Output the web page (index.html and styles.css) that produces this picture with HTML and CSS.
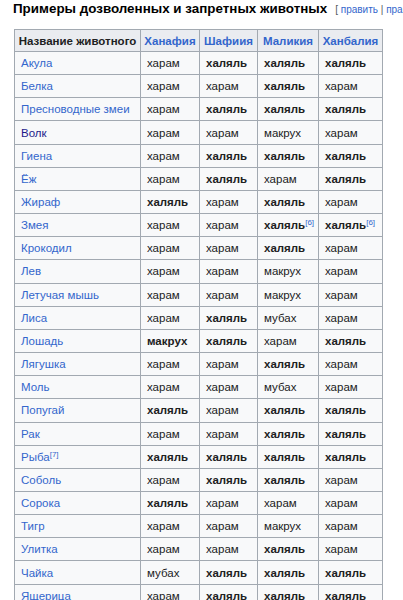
FILE: index.html
```html
<!DOCTYPE html>
<html lang="ru">
<head>
<meta charset="utf-8">
<title>Примеры дозволенных и запретных животных</title>
<link rel="stylesheet" href="styles.css">
</head>
<body>
<h2 class="heading"><span class="headline">Примеры дозволенных и запретных животных</span><span class="edit">[ <a href="#">править</a> | <a href="#">править код</a> ]</span></h2>
<table class="wikitable">
<colgroup><col class="c1"><col class="c2"><col class="c3"><col class="c4"><col class="c5"></colgroup>
<thead>
<tr><th class="plain">Название животного</th><th><a href="#">Ханафия</a></th><th><a href="#">Шафиия</a></th><th><a href="#">Маликия</a></th><th><a href="#">Ханбалия</a></th></tr>
</thead>
<tbody>
<tr><td><a href="#">Акула</a></td><td>харам</td><td><b>халяль</b></td><td><b>халяль</b></td><td><b>халяль</b></td></tr>
<tr><td><a href="#">Белка</a></td><td>харам</td><td>харам</td><td><b>халяль</b></td><td>харам</td></tr>
<tr><td><a href="#">Пресноводные змеи</a></td><td>харам</td><td><b>халяль</b></td><td><b>халяль</b></td><td><b>халяль</b></td></tr>
<tr><td><a href="#" class="visited">Волк</a></td><td>харам</td><td>харам</td><td>макрух</td><td>харам</td></tr>
<tr><td><a href="#">Гиена</a></td><td>харам</td><td><b>халяль</b></td><td><b>халяль</b></td><td><b>халяль</b></td></tr>
<tr><td><a href="#">Ёж</a></td><td>харам</td><td><b>халяль</b></td><td>харам</td><td><b>халяль</b></td></tr>
<tr><td><a href="#">Жираф</a></td><td><b>халяль</b></td><td>харам</td><td><b>халяль</b></td><td>харам</td></tr>
<tr><td><a href="#">Змея</a></td><td>харам</td><td>харам</td><td><b>халяль</b><sup class="ref"><a href="#">[6]</a></sup></td><td><b>халяль</b><sup class="ref"><a href="#">[6]</a></sup></td></tr>
<tr><td><a href="#">Крокодил</a></td><td>харам</td><td>харам</td><td><b>халяль</b></td><td>харам</td></tr>
<tr><td><a href="#">Лев</a></td><td>харам</td><td>харам</td><td>макрух</td><td>харам</td></tr>
<tr><td><a href="#">Летучая мышь</a></td><td>харам</td><td>харам</td><td>макрух</td><td>харам</td></tr>
<tr><td><a href="#">Лиса</a></td><td>харам</td><td><b>халяль</b></td><td>мубах</td><td>харам</td></tr>
<tr><td><a href="#">Лошадь</a></td><td><b>макрух</b></td><td><b>халяль</b></td><td>харам</td><td><b>халяль</b></td></tr>
<tr><td><a href="#">Лягушка</a></td><td>харам</td><td>харам</td><td><b>халяль</b></td><td>харам</td></tr>
<tr><td><a href="#">Моль</a></td><td>харам</td><td>харам</td><td>мубах</td><td>харам</td></tr>
<tr><td><a href="#">Попугай</a></td><td><b>халяль</b></td><td>харам</td><td><b>халяль</b></td><td><b>халяль</b></td></tr>
<tr><td><a href="#">Рак</a></td><td>харам</td><td>харам</td><td><b>халяль</b></td><td><b>халяль</b></td></tr>
<tr><td><a href="#">Рыба</a><sup class="ref"><a href="#">[7]</a></sup></td><td><b>халяль</b></td><td><b>халяль</b></td><td><b>халяль</b></td><td><b>халяль</b></td></tr>
<tr><td><a href="#">Соболь</a></td><td>харам</td><td><b>халяль</b></td><td><b>халяль</b></td><td>харам</td></tr>
<tr><td><a href="#">Сорока</a></td><td><b>халяль</b></td><td>харам</td><td>харам</td><td>харам</td></tr>
<tr><td><a href="#">Тигр</a></td><td>харам</td><td>харам</td><td>макрух</td><td>харам</td></tr>
<tr><td><a href="#">Улитка</a></td><td>харам</td><td>харам</td><td><b>халяль</b></td><td>харам</td></tr>
<tr><td><a href="#">Чайка</a></td><td>мубах</td><td><b>халяль</b></td><td><b>халяль</b></td><td><b>халяль</b></td></tr>
<tr><td><a href="#">Ящерица</a></td><td>харам</td><td><b>халяль</b></td><td><b>халяль</b></td><td><b>халяль</b></td></tr>
</tbody>
</table>
</body>
</html>
```
FILE: styles.css
```css
html, body {
  margin: 0;
  padding: 0;
  background: #ffffff;
  overflow: hidden;
  height: 600px;
}

body {
  font-family: "Liberation Sans", Arial, sans-serif;
  color: #202122;
}

a {
  color: #3366cc;
  text-decoration: none;
}

a.visited {
  color: #1d1a8a;
}

.heading {
  margin: 0;
  padding: 0 0 0 13px;
  height: 18px;
  line-height: 18px;
  font-size: 13.4px;
  font-weight: bold;
  color: #000000;
  white-space: nowrap;
  overflow: hidden;
}

.edit {
  margin-left: 8px;
  font-size: 10px;
  font-weight: normal;
  color: #54595d;
}

.wikitable {
  margin: 11px 0 0 14px;
  border-collapse: collapse;
  table-layout: fixed;
  width: 369px;
  background: #f8f9fa;
  border: 1px solid #a2a9b1;
  font-size: 11.5px;
  color: #202122;
}

.c1 { width: 126px; }
.c2 { width: 59px; }
.c3 { width: 58px; }
.c4 { width: 61px; }
.c5 { width: 64px; }

.wikitable th,
.wikitable td {
  border: 1px solid #a2a9b1;
  padding: 0 6px;
  line-height: 14px;
  white-space: nowrap;
  overflow: visible;
}

.wikitable thead tr {
  height: 22px;
}

.wikitable tbody tr {
  height: 23.16px;
}

.wikitable th {
  background: #eaecf0;
  font-weight: bold;
  text-align: center;
  padding: 0 3px;
}

.wikitable th.plain {
  color: #202122;
}

.wikitable td {
  text-align: left;
}

.wikitable b {
  font-weight: bold;
  color: #202122;
}

.ref {
  font-size: 8px;
  line-height: 1;
  vertical-align: 4px;
  font-weight: normal;
}
```
